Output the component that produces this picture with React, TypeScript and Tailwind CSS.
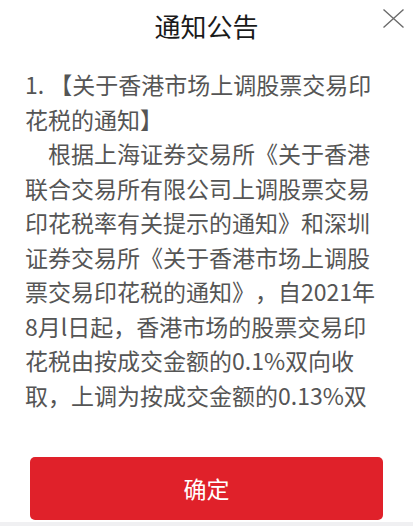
import React from "react";

export default function App() {
  return (
    <div
      className="w-[413px] h-[526px] bg-[#f0f0f2] overflow-hidden"
      style={{ fontFamily: '"Noto Sans CJK SC", "Noto Sans", sans-serif' }}
    >
      <div className="relative h-[522px] bg-white flex flex-col">
        <div className="h-[67px] flex justify-center pt-[13px]">
          <h1 className="text-[26px] leading-[26px] text-[#1a1a1a] font-normal">通知公告</h1>
        </div>
        <button className="absolute left-[382px] top-[8px] w-[23px] h-[21px]" aria-label="关闭">
          <svg width="23" height="21" viewBox="0 0 23 21" fill="none">
            <path d="M1.5 1.5 L21.5 19.5 M21.5 1.5 L1.5 19.5" stroke="#6b6b6b" strokeWidth="1.4" />
          </svg>
        </button>
        <div className="h-[346px] overflow-hidden pl-[25px] w-[381px] text-[23px] leading-[34.5px] text-[#555555] [text-spacing-trim:space-all]">
          <p>1. 【关于香港市场上调股票交易印花税的通知】</p>
          <p className="indent-[23px]">
            根据上海证券交易所《关于香港联合交易所有限公司上调股票交易印花税率有关提示的通知》和深圳证券交易所《关于香港市场上调股票交易印花税的通知》，自2021年8月l日起，香港市场的股票交易印花税由按成交金额的0.1%双向收取，上调为按成交金额的0.13%双向收取。
          </p>
        </div>
        <div className="pt-[44px] pl-[30px]">
          <button className="w-[353px] h-[63px] rounded-[5px] bg-[#e0212a] text-white text-[23px] leading-none flex items-center justify-center">
            确定
          </button>
        </div>
      </div>
    </div>
  );
}
